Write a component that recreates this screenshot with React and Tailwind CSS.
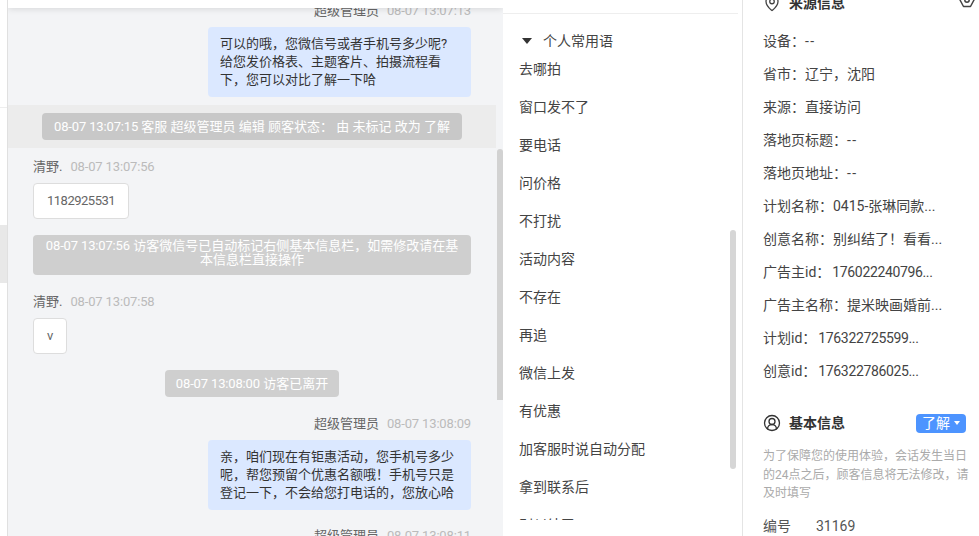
import { CircleUserRound, MapPin } from "lucide-react";

const font = { fontFamily: 'Roboto, "Noto Sans CJK SC", sans-serif' };

const phrases = ["去哪拍", "窗口发不了", "要电话", "问价格", "不打扰", "活动内容", "不存在", "再追", "微信上发", "有优惠", "加客服时说自动分配", "拿到联系后", "别纠结了"];

const sourceInfo = [
  ["设备", <span className="tracking-[1.5px]">--</span>],
  ["省市", "辽宁，沈阳"],
  ["来源", "直接访问"],
  ["落地页标题", <span className="tracking-[1.5px]">--</span>],
  ["落地页地址", <span className="tracking-[1.5px]">--</span>],
  ["计划名称", "0415-张琳同款..."],
  ["创意名称", "别纠结了！看看..."],
  ["广告主id", <span className="ml-[2px] tracking-[-0.35px]">176022240796...</span>],
  ["广告主名称", "提米映画婚前..."],
  ["计划id", <span className="ml-[2px] tracking-[-0.35px]">176322725599...</span>],
  ["创意id", <span className="ml-[2px] tracking-[-0.35px]">176322786025...</span>],
];

const Time = ({ children }) => <span className="tracking-[-0.15px]">{children}</span>;

const StaffHead = ({ time }) => (
  <div className="flex justify-end gap-2 h-4 leading-4 pr-8 text-[13px] text-[#666]">
    <span>超级管理员</span>
    <span className="text-[#bbb] tracking-[-0.15px]">{time}</span>
  </div>
);

const Bubble = ({ children }) => (
  <div className="flex justify-end pr-8 mt-2">
    <div className="w-[263px] h-[70px] rounded bg-[#dbe8ff] px-3 py-2 text-[13px] leading-[18px] text-[#333]">{children}</div>
  </div>
);

const VisitorHead = ({ time }) => (
  <div className="flex gap-2 pl-[25px] h-4 leading-4 text-[13px] text-[#666]">
    <span>清野.</span>
    <span className="text-[#bbb] tracking-[-0.15px]">{time}</span>
  </div>
);

const Reply = ({ children }) => (
  <div className="ml-[25px] mt-2 w-fit h-9 leading-[34px] px-[13px] rounded border border-[#ddd] bg-white text-[13px] tracking-[-0.5px] text-[#666]">{children}</div>
);

export default function App() {
  return (
    <div className="flex h-[536px] w-[979px] overflow-hidden bg-white" style={font}>
      {/* 左侧窄条 */}
      <div className="w-2 shrink-0 flex flex-col border-r border-[#e0e0e0]">
        <div className="h-[108px] border-b border-[#eee]" />
        <div className="h-[117px]" />
        <div className="h-[58px] bg-[#e8e8e8]" />
      </div>

      {/* 聊天区 */}
      <div className="relative w-[495px] shrink-0 overflow-hidden bg-[#f3f4f6]">
        <div className="absolute inset-x-0 top-0 z-10 h-2 bg-white shadow-[0_1px_6px_rgba(0,0,0,0.12)]" />
        <div className="pt-[3px]">
          <StaffHead time="08-07 13:07:13" />
          <Bubble>可以的哦，您微信号或者手机号多少呢?给您发价格表、主题客片、拍摄流程看下，您可以对比了解一下哈</Bubble>

          <div className="mt-2 w-[488px] h-[43px] bg-[#ececec] flex items-center justify-center">
            <div className="w-[420px] h-[27px] leading-[27px] rounded-sm bg-[#c8c8c8] text-center text-[13px] text-white">
              <Time>08-07 13:07:15</Time> 客服 超级管理员 编辑 顾客状态： 由 未标记 改为 了解
            </div>
          </div>

          <div className="mt-[11px]">
            <VisitorHead time="08-07 13:07:56" />
            <Reply>1182925531</Reply>
          </div>

          <div className="ml-[25px] mt-4 w-[438px] h-10 rounded-sm bg-[#cfcfcf] px-3 pt-1 text-center text-[13px] leading-[14px] text-white">
            <Time>08-07 13:07:56</Time> 访客微信号已自动标记右侧基本信息栏，如需修改请在基本信息栏直接操作
          </div>

          <div className="mt-[19px]">
            <VisitorHead time="08-07 13:07:58" />
            <Reply>v</Reply>
          </div>

          <div className="mt-4 flex justify-center pr-[7px]">
            <div className="h-[27px] leading-[27px] w-[174px] rounded-sm bg-[#cfcfcf] text-center text-[13px] text-white">
              <Time>08-07 13:08:00</Time> 访客已离开
            </div>
          </div>

          <div className="mt-[19px]">
            <StaffHead time="08-07 13:08:09" />
            <Bubble>亲，咱们现在有钜惠活动，您手机号多少呢，帮您预留个优惠名额哦！手机号只是登记一下，不会给您打电话的，您放心哈</Bubble>
          </div>

          <div className="mt-[18px]">
            <StaffHead time="08-07 13:08:11" />
          </div>
        </div>
        <div className="absolute right-0 top-[149px] h-[251px] w-[6px] rounded-t bg-[#d2d2d2]" />
      </div>

      {/* 常用语 */}
      <div className="relative w-[240px] shrink-0 overflow-hidden border-r border-[#e4e4e4]">
        <div className="h-[14px] mr-1 border-b border-[#eee]" />
        <div className="flex items-center h-[18px] mt-[18px] pl-[19px] text-sm text-[#444]">
          <span className="w-0 h-0 border-x-[5px] border-x-transparent border-t-[6px] border-t-[#333]" />
          <span className="ml-[11px]">个人常用语</span>
        </div>
        <div className="mt-[9px] pl-4 h-[461px] overflow-hidden">
          {phrases.map((p) => (
            <div key={p} className="h-[38px] leading-[20px] text-sm text-[#444]">{p}</div>
          ))}
        </div>
        <div className="absolute left-[227px] top-[230px] h-[239px] w-[6px] rounded bg-[#d6d6d6]" />
      </div>

      {/* 右侧信息 */}
      <div className="flex-1 min-w-0 pl-5 pr-[10px] -mt-[7px]">
        <div className="flex items-center h-5 text-sm font-semibold text-[#333]">
          <MapPin size={18} strokeWidth={1.75} className="mr-2 text-[#444]" />
          <span>来源信息</span>
          <svg viewBox="0 0 16 16" className="ml-auto -mr-[6px] -mt-[6px] size-4 text-[#444]" fill="none" stroke="currentColor" strokeWidth="1.5" strokeLinejoin="round">
            <path d="M4.5 1.5h7L15 8l-3.5 6.5h-7L1 8z" />
            <circle cx="8" cy="8" r="2.2" />
          </svg>
        </div>
        <div className="mt-[12px] flex flex-col">
          {sourceInfo.map(([k, v]) => (
            <div key={k} className="h-[33px] leading-[33px] text-sm text-[#444] whitespace-nowrap">
              {k}：{v}
            </div>
          ))}
        </div>
        <div className="mt-[25px] flex items-center h-5">
          <CircleUserRound size={18} strokeWidth={1.75} className="mr-2 text-[#333]" />
          <span className="text-sm font-semibold text-[#333]">基本信息</span>
          <span className="ml-auto mr-[3px] flex items-center justify-center w-[50px] h-[19px] rounded-sm bg-[#4d94ff] text-sm text-white">
            了解
            <span className="ml-1 w-0 h-0 border-x-[3px] border-x-transparent border-t-[4px] border-t-white" />
          </span>
        </div>
        <p className="mt-[14px] text-xs leading-[18.5px] text-[#aaa]">为了保障您的使用体验，会话发生当日的24点之后，顾客信息将无法修改，请及时填写</p>
        <div className="mt-[13px] flex text-sm text-[#555]">
          <span className="w-[53px]">编号</span>
          <span>31169</span>
        </div>
      </div>
    </div>
  );
}
